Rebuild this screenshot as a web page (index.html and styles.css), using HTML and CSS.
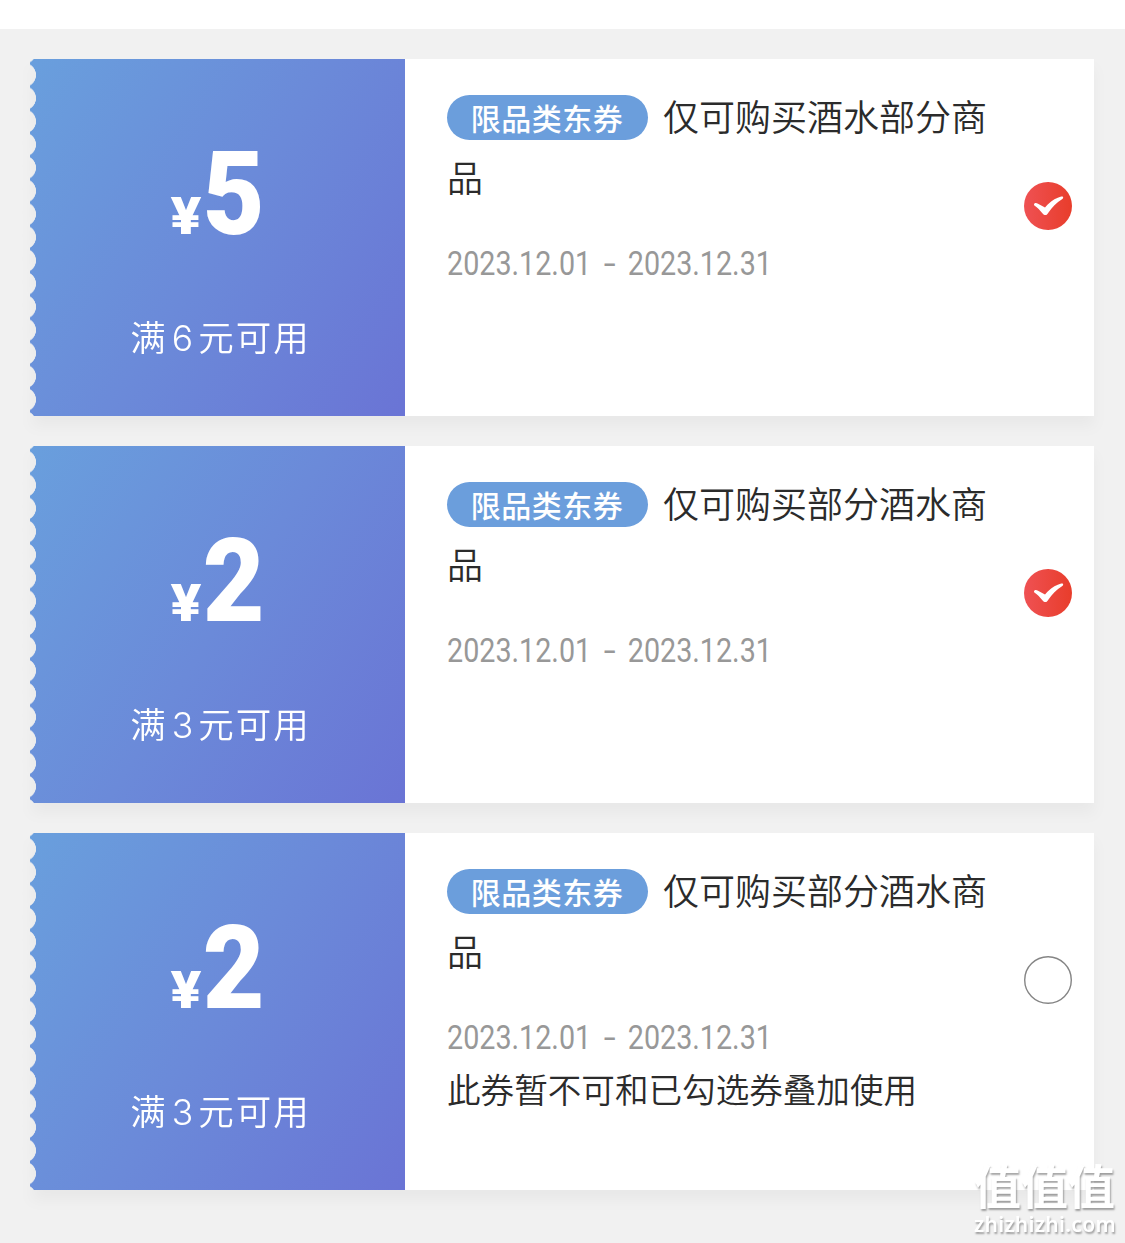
FILE: index.html
```html
<!DOCTYPE html>
<html lang="zh-CN">

<head>
    <meta charset="UTF-8">
    <meta name="viewport" content="width=device-width, initial-scale=1.0">
    <title>优惠券</title>
    <link rel="stylesheet" href="styles.css">
</head>

<body>
    <div class="coupon-list">
        <div class="coupon">
            <div class="coupon-left">
                <div class="price"><span class="yen">¥</span><span class="num">5</span></div>
                <div class="limit">满<span class="limit-num">6</span>元可用</div>
            </div>
            <div class="coupon-right">
                <div class="info">
                    <div class="title"><span class="tag">限品类东券</span>仅可购买酒水部分商品</div>
                    <div class="date">2023.12.01<span class="dash">-</span>2023.12.31</div>
                </div>
                <svg class="check" viewBox="0 0 48 48">
                    <defs>
                        <linearGradient id="red" x1="0" y1="0" x2="1" y2="0">
                            <stop offset="0" stop-color="#ef5153" />
                            <stop offset="1" stop-color="#e83d2b" />
                        </linearGradient>
                    </defs>
                    <circle cx="24" cy="24" r="24" fill="url(#red)" />
                    <path d="M10 22.4C10.6 20.6 12.4 20.8 14 21.8L21 25.4C26 19.8 31.5 16 37.2 14.6C39.8 14.2 39.6 16 38 17.2C32.5 20.4 28 25.4 24 31.2C22.4 33.8 20.4 33.6 18.6 31.4C16 28.2 13.4 25.6 10.7 23.7Q9.8 23.1 10 22.4Z" fill="#fff" />
                </svg>
            </div>
        </div>

        <div class="coupon">
            <div class="coupon-left">
                <div class="price"><span class="yen">¥</span><span class="num">2</span></div>
                <div class="limit">满<span class="limit-num">3</span>元可用</div>
            </div>
            <div class="coupon-right">
                <div class="info">
                    <div class="title"><span class="tag">限品类东券</span>仅可购买部分酒水商品</div>
                    <div class="date">2023.12.01<span class="dash">-</span>2023.12.31</div>
                </div>
                <svg class="check" viewBox="0 0 48 48">
                    <circle cx="24" cy="24" r="24" fill="url(#red)" />
                    <path d="M10 22.4C10.6 20.6 12.4 20.8 14 21.8L21 25.4C26 19.8 31.5 16 37.2 14.6C39.8 14.2 39.6 16 38 17.2C32.5 20.4 28 25.4 24 31.2C22.4 33.8 20.4 33.6 18.6 31.4C16 28.2 13.4 25.6 10.7 23.7Q9.8 23.1 10 22.4Z" fill="#fff" />
                </svg>
            </div>
        </div>

        <div class="coupon">
            <div class="coupon-left">
                <div class="price"><span class="yen">¥</span><span class="num">2</span></div>
                <div class="limit">满<span class="limit-num">3</span>元可用</div>
            </div>
            <div class="coupon-right">
                <div class="info">
                    <div class="title"><span class="tag">限品类东券</span>仅可购买部分酒水商品</div>
                    <div class="date">2023.12.01<span class="dash">-</span>2023.12.31</div>
                    <div class="note">此券暂不可和已勾选券叠加使用</div>
                </div>
                <svg class="check" viewBox="0 0 48 48">
                    <circle cx="24" cy="24" r="23.3" fill="none" stroke="#858585" stroke-width="1.4" />
                </svg>
            </div>
        </div>
    </div>

    <div class="watermark">
        <div class="watermark-name">值值值</div>
        <div class="watermark-url">zhizhizhi.com</div>
    </div>
</body>

</html>
```

FILE: styles.css
```css
* {
    box-sizing: border-box;
}

body {
    margin: 0;
    padding-top: 29px;
    background: #fff;
    color: #2b2b2b;
    font-family: "Noto Sans CJK SC", sans-serif;
}

.coupon-list {
    display: flex;
    flex-direction: column;
    gap: 30px;
    height: 1214px;
    padding: 30px 31px 0 30px;
    background: #f1f1f1;
}

.coupon {
    display: flex;
    height: 357px;
    filter: drop-shadow(0 10px 7px rgba(0, 0, 0, 0.035));
}

.coupon-left {
    width: 375px;
    padding-top: 80px;
    background: linear-gradient(122deg, #699fdd 0%, #6b8ad9 50%, #6a74d5 100%);
    color: #fff;
    text-align: center;
    /* ticket teeth on the left edge */
    -webkit-mask: radial-gradient(circle at -6px 50%, transparent 11.7px, #000 12.3px) 0 4.4px / 100% 23.2px;
    mask: radial-gradient(circle at -6px 50%, transparent 11.7px, #000 12.3px) 0 4.4px / 100% 23.2px;
}

.price {
    display: flex;
    justify-content: center;
    align-items: baseline;
    height: 111px;
    padding-left: 5px;
    line-height: 111px;
    font-family: Roboto, sans-serif;
    font-weight: 900;
}

.yen {
    font-size: 52px;
    transform: scaleX(1.1);
}

.num {
    font-size: 116px;
    transform: scaleX(0.92);
}

.limit {
    margin-top: 60px;
    padding-left: 6px;
    font-size: 35.5px;
    line-height: 52px;
    letter-spacing: 2px;
    font-weight: 350;
}

.limit-num {
    margin: 0 3px 0 4px;
    font-family: Inter, sans-serif;
    font-weight: 300;
}

.coupon-right {
    display: flex;
    flex: 1;
    justify-content: space-between;
    padding: 26px 22px 0 42px;
    background: #fff;
}

.info {
    width: 550px;
}

.title {
    font-size: 36px;
    line-height: 61px;
    font-weight: 350;
}

.tag {
    display: inline-block;
    width: 201px;
    height: 45px;
    margin-right: 15px;
    padding-right: 1px;
    border-radius: 23px;
    background: #6b9edc;
    color: #fff;
    font-size: 30px;
    line-height: 45px;
    letter-spacing: 0.5px;
    font-weight: 500;
    text-align: center;
    vertical-align: 1px;
}

.date {
    margin-top: 31px;
    color: #989898;
    font-family: Roboto, sans-serif;
    font-size: 34px;
    line-height: 50px;
    font-weight: 400;
    white-space: nowrap;
    transform: scaleX(0.844);
    transform-origin: left;
}

.dash {
    display: inline-block;
    margin: 0 17px;
    transform: scaleX(1.5);
}

.note {
    margin-top: 2px;
    font-size: 33.6px;
    line-height: 50px;
    font-weight: 350;
}

.check {
    width: 48px;
    height: 48px;
    margin-top: 97px;
}

.watermark {
    position: absolute;
    top: 1156px;
    left: 974px;
    width: 144px;
    color: #fff;
    text-shadow: 1px 2px 2px rgba(0, 0, 0, 0.35);
    white-space: nowrap;
}

.watermark-name {
    font-size: 47px;
    line-height: 56px;
    font-weight: 700;
}

.watermark-url {
    font-family: "Noto Sans", sans-serif;
    font-size: 21px;
    line-height: 24px;
    letter-spacing: 0.3px;
    font-weight: 600;
}
```
